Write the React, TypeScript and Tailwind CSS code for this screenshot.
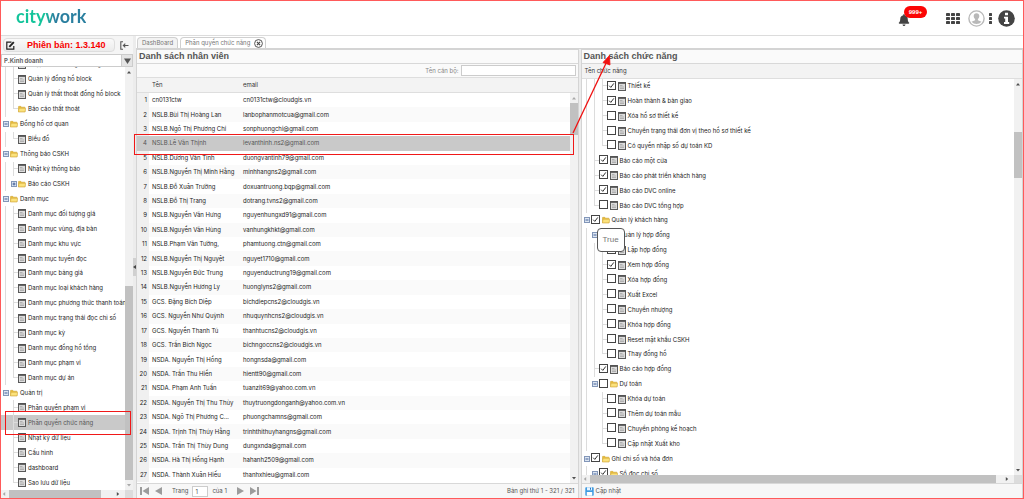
import React from "react";
import { FaBell } from "react-icons/fa";

type Cell = "line" | "tee" | "end" | "minus" | "plus" | "none";

interface NavRow {
  label: string;
  cells: Cell[];
  folder?: boolean;
  active?: boolean;
}

interface PermRow {
  label: string;
  cells: Cell[];
  folder?: boolean;
  checked?: boolean;
}

const leaf = (label: string, last = false, active = false): NavRow => ({
  label,
  cells: ["line", last ? "end" : "tee"],
  active,
});
const root = (label: string): NavRow => ({ label, cells: ["minus"], folder: true });

const navRows: NavRow[] = [
  leaf("Nhập chỉ số đồng hồ tổng"),
  leaf("Quản lý đồng hồ block"),
  leaf("Quản lý thất thoát đồng hồ block"),
  { label: "Báo cáo thất thoát", cells: ["line", "end"], folder: true },
  root("Đồng hồ cơ quan"),
  leaf("Biểu đồ", true),
  root("Thông báo CSKH"),
  leaf("Nhật ký thông báo"),
  { label: "Báo cáo CSKH", cells: ["line", "plus"], folder: true },
  root("Danh mục"),
  leaf("Danh mục đối tượng giá"),
  leaf("Danh mục vùng, địa bàn"),
  leaf("Danh mục khu vực"),
  leaf("Danh mục tuyến đọc"),
  leaf("Danh mục bảng giá"),
  leaf("Danh mục loại khách hàng"),
  leaf("Danh mục phương thức thanh toán"),
  leaf("Danh mục trạng thái đọc chỉ số"),
  leaf("Danh mục kỳ"),
  leaf("Danh mục đồng hồ tổng"),
  leaf("Danh mục phạm vi"),
  leaf("Danh mục dự án", true),
  root("Quản trị"),
  { label: "Phân quyền phạm vi", cells: ["none", "tee"] },
  { label: "Phân quyền chức năng", cells: ["none", "tee"], active: true },
  { label: "Nhật ký dữ liệu", cells: ["none", "tee"] },
  { label: "Cấu hình", cells: ["none", "tee"] },
  { label: "dashboard", cells: ["none", "tee"] },
  { label: "Sao lưu dữ liệu", cells: ["none", "end"] },
];

const perm = (label: string, checked: boolean, cells: Cell[], folder = false): PermRow => ({
  label,
  checked,
  cells,
  folder,
});

const permRows: PermRow[] = [
  perm("Thiết kế", true, ["line", "line", "tee"]),
  perm("Hoàn thành & bàn giao", true, ["line", "line", "tee"]),
  perm("Xóa hồ sơ thiết kế", false, ["line", "line", "tee"]),
  perm("Chuyển trạng thái đơn vị theo hồ sơ thiết kế", false, ["line", "line", "tee"]),
  perm("Có quyền nhập số dự toán KD", false, ["line", "line", "end"]),
  perm("Báo cáo một cửa", true, ["line", "tee"]),
  perm("Báo cáo phát triển khách hàng", true, ["line", "tee"]),
  perm("Báo cáo DVC online", true, ["line", "tee"]),
  perm("Báo cáo DVC tổng hợp", false, ["line", "end"]),
  perm("Quản lý khách hàng", true, ["minus"], true),
  perm("Quản lý hợp đồng", true, ["line", "minus"], true),
  perm("Lập hợp đồng", false, ["line", "line", "tee"]),
  perm("Xem hợp đồng", true, ["line", "line", "tee"]),
  perm("Xóa hợp đồng", false, ["line", "line", "tee"]),
  perm("Xuất Excel", false, ["line", "line", "tee"]),
  perm("Chuyển nhượng", false, ["line", "line", "tee"]),
  perm("Khóa hợp đồng", false, ["line", "line", "tee"]),
  perm("Reset mật khẩu CSKH", false, ["line", "line", "tee"]),
  perm("Thay đồng hồ", false, ["line", "line", "end"]),
  perm("Báo cáo hợp đồng", true, ["line", "tee"]),
  perm("Dự toán", false, ["line", "minus"], true),
  perm("Khóa dự toán", false, ["line", "none", "tee"]),
  perm("Thêm dự toán mẫu", false, ["line", "none", "tee"]),
  perm("Chuyển phòng kế hoạch", false, ["line", "none", "tee"]),
  perm("Cập nhật Xuất kho", false, ["line", "none", "end"]),
  perm("Ghi chỉ số và hóa đơn", true, ["minus"], true),
  perm("Sổ đọc chỉ số", true, ["line", "minus"], true),
];

const staff: [string, string][] = [
  ["cn0131ctw", "cn0131ctw@cloudgis.vn"],
  ["NSLB.Bùi Thị Hoàng Lan", "lanbophanmotcua@gmail.com"],
  ["NSLB.Ngô Thị Phương Chi", "sonphuongchi@gmail.com"],
  ["NSLB.Lê Văn Thịnh", "levanthinh.ns2@gmail.com"],
  ["NSLB.Dương Văn Tính", "duongvantinh79@gmail.com"],
  ["NSLB.Nguyễn Thị Minh Hằng", "minhhangns2@gmail.com"],
  ["NSLB.Đỗ Xuân Trường", "doxuantruong.bqp@gmail.com"],
  ["NSLB.Đỗ Thị Trang", "dotrang.tvns2@gmail.com"],
  ["NSLB.Nguyễn Văn Hưng", "nguyenhungxd91@gmail.com"],
  ["NSLB.Nguyễn Văn Hùng", "vanhungkhkt@gmail.com"],
  ["NSLB.Phạm Văn Tường,", "phamtuong.ctn@gmail.com"],
  ["NSLB.Nguyễn Thị Nguyệt", "nguyet1710@gmail.com"],
  ["NSLB.Nguyễn Đức Trung", "nguyenductrung19@gmail.com"],
  ["NSLB.Nguyễn Hương Ly", "huonglyns2@gmail.com"],
  ["GCS. Đặng Bích Diệp", "bichdiepcns2@cloudgis.vn"],
  ["GCS. Nguyễn Như Quỳnh", "nhuquynhcns2@cloudgis.vn"],
  ["GCS. Nguyễn Thanh Tú", "thanhtucns2@cloudgis.vn"],
  ["GCS. Trần Bích Ngọc", "bichngoccns2@cloudgis.vn"],
  ["NSDA. Nguyễn Thị Hồng", "hongnsda@gmail.com"],
  ["NSDA. Trần Thu Hiền", "hientt90@gmail.com"],
  ["NSDA. Phạm Anh Tuấn", "tuanzit69@yahoo.com.vn"],
  ["NSDA. Nguyễn Thị Thu Thủy", "thuytruongdonganh@yahoo.com.vn"],
  ["NSDA. Ngô Thị Phương C…", "phuongchamns@gmail.com"],
  ["NSDA. Trịnh Thị Thúy Hằng", "trinhthithuyhangns@gmail.com"],
  ["NSDA. Trần Thị Thùy Dung", "dungxnda@gmail.com"],
  ["NSDA. Hà Thị Hồng Hạnh", "hahanh2509@gmail.com"],
  ["NSDA. Thành Xuân Hiếu", "thanhxhieu@gmail.com"],
];

function Connector({ kind }: { kind: Cell }) {
  if (kind === "none") return <span className="w-2 shrink-0" />;
  if (kind === "minus" || kind === "plus") {
    return (
      <span className="flex w-2 shrink-0 items-center justify-center self-stretch">
        <svg viewBox="0 0 6 6" className="size-1.5">
          <rect x="0.5" y="0.5" width="5" height="5" fill="#dde6f2" stroke="#8296b8" />
          <path d={kind === "plus" ? "M1.5 3h3M3 1.5v3" : "M1.5 3h3"} stroke="#33538f" strokeWidth="0.9" />
        </svg>
      </span>
    );
  }
  return (
    <span className="flex w-2 shrink-0 self-stretch">
      <span className={`w-1 border-r border-[#dcdcdc] ${kind === "end" ? "h-1/2" : ""}`} />
      <span className={`h-1/2 w-1 ${kind === "line" ? "" : "border-b border-[#dcdcdc]"}`} />
    </span>
  );
}

function PageIcon() {
  return (
    <svg viewBox="0 0 8 9" className="h-[9px] w-2 shrink-0">
      <rect x="0.5" y="0.5" width="7" height="8" fill="#dcdcdc" stroke="#5a5a5a" />
      <path d="M0.5 1.2h7" stroke="#4a4a4a" strokeWidth="1.2" />
      <path d="M2 3.5h2.5M2 5h4M2 6.5h4" stroke="#a5a5a5" strokeWidth="0.8" />
    </svg>
  );
}

function FolderIcon() {
  return (
    <svg viewBox="0 0 9 8" className="size-2 shrink-0">
      <path d="M0.4 7.2V1.6q0-.6.6-.6h2.2l.9.9h3.3q.6 0 .6.6v4.7z" fill="#e8bd3c" stroke="#c79a2c" strokeWidth="0.5" />
      <path d="M1.2 3.2h7.4l-.7 4H.5z" fill="#fbe27c" stroke="#cfa233" strokeWidth="0.5" />
    </svg>
  );
}

function Arrow({ dir, dark = true }: { dir: "up" | "down" | "left" | "right"; dark?: boolean }) {
  const d = {
    up: "M1 4.5L3 2l2 2.5z",
    down: "M1 2l2 2.5L5 2z",
    left: "M4.2 1L1.8 3l2.4 2z",
    right: "M1.8 1l2.4 2-2.4 2z",
  }[dir];
  return (
    <svg viewBox="0 0 6 6" className="size-1.5 shrink-0">
      <path d={d} fill={dark ? "#505050" : "#a8a8a8"} />
    </svg>
  );
}

function VScroll({ before, thumb, after, upDark = true, downDark = true }: {
  before: number; thumb: number; after: number; upDark?: boolean; downDark?: boolean;
}) {
  return (
    <div className="flex w-2 shrink-0 flex-col items-center bg-[#f1f1f1]">
      <div className="flex h-2.5 items-center"><Arrow dir="up" dark={upDark} /></div>
      <div className="flex w-full flex-1 flex-col">
        <div style={{ flexGrow: before }} />
        <div className="bg-[#c1c1c1]" style={{ flexGrow: thumb }} />
        <div style={{ flexGrow: after }} />
      </div>
      <div className="flex h-2.5 items-center"><Arrow dir="down" dark={downDark} /></div>
    </div>
  );
}

function HScroll({ thumb, after }: { thumb: number; after: number }) {
  return (
    <div className="flex h-2 shrink-0 bg-[#f1f1f1]">
      <div className="flex w-2 items-center"><Arrow dir="left" dark={false} /></div>
      <div className="flex flex-1">
        <div className="bg-[#c1c1c1]" style={{ flexGrow: thumb }} />
        <div style={{ flexGrow: after }} />
      </div>
      <div className="flex w-2.5 items-center"><Arrow dir="right" /></div>
      <div className="w-2 bg-[#dcdcdc]" />
    </div>
  );
}

function Header() {
  return (
    <header className="flex h-[35px] shrink-0 items-center justify-between border-b border-[#dcdcdc] bg-white pr-2 pl-[15px]">
      <a href="#" className="bg-linear-to-r from-[#12c49a] from-40% to-[#2a7f9f] to-55% bg-clip-text pb-1 font-[Lato,sans-serif] text-[18px] leading-5 font-bold text-transparent">
        citywork
      </a>
      <div className="flex items-center text-[#444]">
        <button aria-label="Thông báo" className="relative mr-9 flex pt-1">
          <FaBell className="size-3" />
          <span className="absolute -top-1 left-1.5 flex h-3 w-[23px] items-center justify-center rounded-full bg-[#fb0505] font-['Liberation_Sans',Arial,sans-serif] text-[6px] font-bold text-white">
            999+
          </span>
        </button>
        <button aria-label="Ứng dụng" className="mr-2 flex">
          <svg viewBox="0 0 14 11" className="h-[11px] w-3.5" fill="#444">
            {[0, 4, 8].map((y) => [0, 5, 10].map((x) => (
              <rect key={`${x}-${y}`} x={x} y={y} width="4" height="3" rx="0.4" />
            )))}
          </svg>
        </button>
        <button aria-label="Tài khoản" className="mr-1 flex">
          <svg viewBox="0 0 17 17" className="size-[17px]">
            <circle cx="8.5" cy="8.5" r="7.6" fill="#fff" stroke="#b9b9b9" strokeWidth="1.4" />
            <path d="M8.5 3.2c1.8 0 2.8 1.2 2.8 2.9 0 1.3-.6 2.4-1.4 3v1.1l3.6 1.5a6.5 6.5 0 0 1-10 0l3.6-1.5V9.1c-.8-.6-1.4-1.7-1.4-3 0-1.7 1-2.9 2.8-2.9z" fill="#b9b9b9" />
          </svg>
        </button>
        <button aria-label="Thêm" className="mr-1.5 flex">
          <svg viewBox="0 0 3 11" className="h-[11px] w-[3px]" fill="#444">
            <rect width="3" height="3" rx="0.6" /><rect y="4" width="3" height="3" rx="0.6" /><rect y="8" width="3" height="3" rx="0.6" />
          </svg>
        </button>
        <button aria-label="Thông tin" className="flex">
          <svg viewBox="0 0 17 17" className="size-[17px]">
            <circle cx="8.5" cy="8.5" r="8.3" fill="#444" />
            <path d="M7 2.7h3v2.5H7zM6 6.7h4V12h1.2v1.9H6V12h1.2V8.6H6z" fill="#fff" />
          </svg>
        </button>
      </div>
    </header>
  );
}

function Sidebar() {
  return (
    <aside className="flex w-[132px] shrink-0 flex-col bg-white">
      <div className="flex h-[18px] shrink-0 items-center justify-between bg-[#f5f5f5] pr-1 pl-0.5">
        <button className="flex h-3.5 w-28 items-center gap-3 rounded-sm border border-[#dedede] bg-linear-to-b from-[#fafafa] to-[#ececec] pl-0.5 font-['Liberation_Sans',Arial,sans-serif] text-[9px] font-bold text-[#f80000]">
          <svg viewBox="0 0 9 9" className="size-[9px]" fill="none" stroke="#222">
            <path d="M5.5 1.2H.8v7h7V5" strokeWidth="1.2" />
            <path d="M3.3 5.8L7.8 1.2" strokeWidth="1.9" />
          </svg>
          Phiên bản: 1.3.140
        </button>
        <button aria-label="Thu gọn" className="flex">
          <svg viewBox="0 0 9 9" className="size-[9px]" fill="none" stroke="#555">
            <path d="M3 .7H.8v7.6H3M8.5 4.5H3.5M5.3 2.6L3.3 4.5l2 1.9" strokeWidth="1.1" />
          </svg>
        </button>
      </div>
      <div className="flex h-[13px] shrink-0 items-stretch border border-[#ccc]">
        <select aria-label="Phòng ban" className="min-w-0 flex-1 appearance-none bg-white pl-0.5 font-bold text-[#666]">
          <option>P.Kinh doanh</option>
        </select>
        <span className="flex w-[11px] items-center justify-center border-l border-[#ccc] bg-[#e4e4e4]">
          <svg viewBox="0 0 7 6" className="h-1.5 w-[7px]"><path d="M0 .5h7L3.5 6z" fill="#555" /></svg>
        </span>
      </div>
      <div className="flex min-h-0 flex-1">
        <nav className="flex min-w-0 flex-1 flex-col justify-end overflow-hidden">
          <ul className="grid h-[433px] shrink-0 auto-rows-fr">
            {navRows.map((r) => (
              <li key={r.label} className={r.active ? "bg-[#c9c9c9] text-[#555]" : "text-[#222]"}>
                <a href="#" className="flex h-full items-center pl-px whitespace-nowrap">
                  {r.cells.map((c, i) => <Connector key={i} kind={c} />)}
                  {r.folder ? <FolderIcon /> : <PageIcon />}
                  <span className="pl-0.5">{r.label}</span>
                </a>
              </li>
            ))}
          </ul>
        </nav>
        <VScroll before={210} thumb={194} after={0} downDark={false} />
      </div>
      <HScroll thumb={92} after={14} />
    </aside>
  );
}

function Tabs() {
  return (
    <div className="flex h-[13px] shrink-0 items-end gap-0.5 border-b border-[#d4d4d4] bg-white pl-px text-[#777]">
      <button className="h-[11px] rounded-t-sm border border-b-0 border-[#d0d0d0] bg-[#f3f3f3] px-1">DashBoard</button>
      <button className="flex h-[11px] items-center gap-1 rounded-t-sm border border-b-0 border-[#d0d0d0] bg-white pr-0.5 pl-1">
        Phân quyền chức năng
        <svg viewBox="0 0 9 9" className="size-[9px]" fill="none" stroke="#444">
          <circle cx="4.5" cy="4.5" r="3.9" strokeWidth="0.9" />
          <path d="M2.9 2.9l3.2 3.2M6.1 2.9L2.9 6.1" strokeWidth="1.1" />
        </svg>
      </button>
    </div>
  );
}

function Pager() {
  return (
    <div className="flex h-[15px] shrink-0 items-center border-t border-[#d8d8d8] bg-[#f7f7f7] px-[3px] text-[#555]">
      <button aria-label="Trang đầu" className="mr-1.5 flex">
        <svg viewBox="0 0 9 8" className="h-2 w-[9px]" fill="#9c9c9c"><path d="M0 0h2v8H0zM9 0v8L2.5 4z" /></svg>
      </button>
      <button aria-label="Trang trước" className="mr-2.5 flex">
        <svg viewBox="0 0 7 8" className="h-2 w-[7px]" fill="#9c9c9c"><path d="M7 0v8L0 4z" /></svg>
      </button>
      <label className="flex items-center gap-1">
        Trang
        <input defaultValue="1" className="h-[11px] w-4 border border-[#ccc] bg-white pl-0.5" />
      </label>
      <span className="pl-1">của 1</span>
      <button aria-label="Trang sau" className="ml-2.5 flex">
        <svg viewBox="0 0 7 8" className="h-2 w-[7px]" fill="#9c9c9c"><path d="M0 0v8l7-4z" /></svg>
      </button>
      <button aria-label="Trang cuối" className="ml-1.5 flex">
        <svg viewBox="0 0 9 8" className="h-2 w-[9px]" fill="#9c9c9c"><path d="M7 0h2v8H7zM0 0v8l6.5-4z" /></svg>
      </button>
      <span className="ml-auto">Bản ghi thứ 1 - 321 / 321</span>
    </div>
  );
}

function PanelTitle({ children }: { children: React.ReactNode }) {
  return (
    <h2 className="h-3.5 shrink-0 border-b border-[#d8d8d8] bg-[#fafafa] pl-0.5 font-['Liberation_Sans',Arial,sans-serif] text-[9px] leading-[13px] font-bold text-[#555]">
      {children}
    </h2>
  );
}

function StaffPanel() {
  return (
    <section className="flex min-w-0 flex-1 flex-col border border-b-0 border-[#d4d4d4] bg-white">
      <PanelTitle>Danh sách nhân viên</PanelTitle>
      <label className="flex h-[13px] shrink-0 items-center justify-end gap-0.5 bg-[#fafafa] pr-0.5 text-[#888]">
        Tên cán bộ:
        <input className="h-[11px] w-[115px] border border-[#ccc] bg-white px-0.5" />
      </label>
      <div className="flex min-h-0 flex-1 flex-col">
        <div className="flex h-4 shrink-0 items-center border-y border-[#dedede] bg-[#f3f3f3] text-[#333]">
          <span className="w-[103px] pl-[15px]">Tên</span>
          <span className="pl-[3px]">email</span>
        </div>
        <div className="flex min-h-0 flex-1">
          <div className="min-w-0 flex-1 overflow-hidden">
            <table className="h-[389px] w-full table-fixed border-collapse">
              <colgroup><col className="w-3" /><col className="w-[91px]" /><col /></colgroup>
              <tbody>
                {staff.map(([name, email], i) => (
                  <tr key={email} className={i === 3 ? "bg-[#c9c9c9] text-[#555]" : i % 2 ? "bg-[#fafafa]" : "bg-white"}>
                    <td className={`pr-0.5 text-right ${i === 3 ? "" : "bg-[#f0f0f0]"}`}>{i + 1}</td>
                    <td className="pl-[3px] whitespace-nowrap">{name}</td>
                    <td className="pl-[3px] whitespace-nowrap">{email}</td>
                  </tr>
                ))}
              </tbody>
            </table>
          </div>
          <VScroll before={0} thumb={32} after={340} upDark={false} />
        </div>
      </div>
      <Pager />
    </section>
  );
}

function PermissionRow({ row }: { row: PermRow }) {
  return (
    <li className="flex items-center whitespace-nowrap">
      {row.cells.map((c, i) => <Connector key={i} kind={c} />)}
      <label className="flex items-center gap-0.5">
        <span className="mb-0.5 grid size-[9px]">
          <input
            type="checkbox"
            defaultChecked={row.checked}
            className="peer col-start-1 row-start-1 size-[9px] appearance-none border border-[#444] bg-white"
          />
          <svg viewBox="0 0 9 9" className="pointer-events-none col-start-1 row-start-1 hidden size-[9px] peer-checked:block" fill="none">
            <path d="M2.2 4.7l1.6 1.7 3-4" stroke="#333" strokeWidth="1" />
          </svg>
        </span>
        {row.folder ? <FolderIcon /> : <PageIcon />}
        <span>{row.label}</span>
      </label>
    </li>
  );
}

function PermissionPanel() {
  return (
    <section className="flex min-w-0 flex-1 flex-col border border-b-0 border-[#d4d4d4] bg-white">
      <PanelTitle>Danh sách chức năng</PanelTitle>
      <div className="flex h-[15px] shrink-0 items-center border-b border-[#dedede] bg-[#f3f3f3] pl-[3px] text-[#333]">
        Tên chức năng
      </div>
      <div className="flex min-h-0 flex-1">
        <div className="relative min-w-0 flex-1 overflow-hidden">
          <ul className="grid h-[402px] auto-rows-fr pl-px">
            {permRows.map((r) => <PermissionRow key={r.label} row={r} />)}
          </ul>
          <div role="tooltip" className="absolute top-[149px] left-[15px] flex h-6 w-7 items-center justify-center rounded-sm border border-[#555] bg-white font-['Liberation_Sans',Arial,sans-serif] text-[8px] text-[#777]">
            True
          </div>
        </div>
        <VScroll before={43} thumb={46} after={287} />
      </div>
      <HScroll thumb={405} after={8} />
      <div className="flex h-[15px] shrink-0 items-center border-t border-[#d8d8d8] bg-[#f7f7f7] pl-[3px] text-[#555]">
        <button className="flex items-center gap-0.5">
          <svg viewBox="0 0 9 9" className="size-[9px]">
            <rect x="0.3" y="0.3" width="8.4" height="8.4" rx="0.8" fill="#3f9be0" />
            <path d="M2 .3h5v3H2z" fill="#e8f4ff" />
            <path d="M1.8 5h5.4v3.7H1.8z" fill="#fff" />
            <path d="M5 .8h1v2H5z" fill="#2878bd" />
          </svg>
          Cập nhật
        </button>
      </div>
    </section>
  );
}

function Annotations() {
  return (
    <div className="pointer-events-none absolute inset-0 border border-[#ff5a5a]">
      <div className="absolute top-[410px] left-1 h-6 w-[126px] border border-[#f01818]" />
      <div className="absolute top-[133px] left-[133px] h-[21px] w-[440px] border border-[#f01818]" />
      <svg viewBox="0 0 44 82" className="absolute top-[52px] left-[570px] h-[82px] w-11" fill="none" stroke="#f01010">
        <path d="M2 80L37.5 5" strokeWidth="1.3" />
        <path d="M32 9.5L38.5 2.5 39 12z" fill="#f01010" strokeWidth="0.8" />
      </svg>
    </div>
  );
}

export default function App() {
  return (
    <div className="relative flex h-screen flex-col overflow-hidden bg-[#ececec] p-px font-[Inter,'Liberation_Sans',sans-serif] text-[6px] leading-[10px] text-[#222]">
      <Header />
      <div className="flex min-h-0 flex-1">
        <Sidebar />
        <div className="flex w-[3px] shrink-0 items-center">
          <span className="flex h-[18px] w-[3px] items-center bg-[#d0d0d0]">
            <svg viewBox="0 0 3 4" className="h-1 w-[3px]"><path d="M3 0v4L0 2z" fill="#444" /></svg>
          </span>
        </div>
        <main className="flex min-w-0 flex-1 flex-col">
          <Tabs />
          <div className="flex min-h-0 flex-1 gap-0.5">
            <StaffPanel />
            <PermissionPanel />
          </div>
        </main>
      </div>
      <Annotations />
    </div>
  );
}
